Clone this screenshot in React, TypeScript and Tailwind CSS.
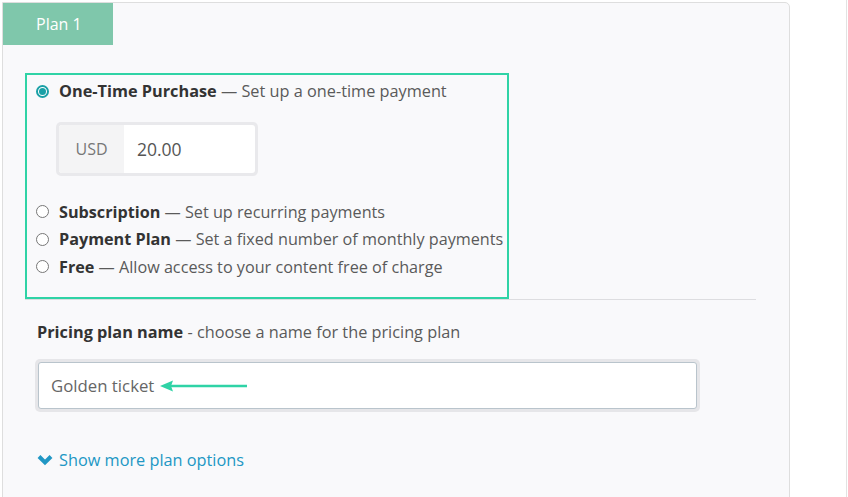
const options = [
  { title: "One-Time Purchase", desc: "Set up a one-time payment" },
  { title: "Subscription", desc: "Set up recurring payments" },
  { title: "Payment Plan", desc: "Set a fixed number of monthly payments" },
  { title: "Free", desc: "Allow access to your content free of charge" },
];

function Radio({ checked }: { checked?: boolean }) {
  return checked ? (
    <span className="w-[13px] h-[13px] rounded-full border-2 border-[#1aa0a6] bg-white flex items-center justify-center shrink-0">
      <span className="w-[7px] h-[7px] rounded-full bg-[#1aa0a6]" />
    </span>
  ) : (
    <span className="w-[13px] h-[13px] rounded-full border border-[#777] bg-white shrink-0" />
  );
}

function OptionRow({ title, desc, checked }: { title: string; desc: string; checked?: boolean }) {
  return (
    <label className="flex items-center gap-[10px] h-[27.5px] text-[16.2px] cursor-pointer">
      <Radio checked={checked} />
      <span className="text-[#5a5a5a] whitespace-nowrap">
        <b className="font-bold text-[#333]">{title}</b> — {desc}
      </span>
    </label>
  );
}

export default function App() {
  return (
    <div
      className="h-[497px] w-[848px] bg-white flex overflow-hidden"
      style={{ fontFamily: "'Open Sans', Arial, sans-serif" }}
    >
      {/* panel */}
      <section className="mt-[2px] ml-[2px] w-[788px] h-[520px] bg-[#f9f9fb] border border-[#dedede] rounded-tr-[5px]">
        <div className="w-[110px] h-[42px] bg-[#7fc7ab] text-white text-[16px] flex items-center pl-[33px]">
          Plan 1
        </div>

        {/* price type */}
        <div className="mt-[28px] ml-[22px] w-[484px] h-[226px] border-2 border-[#2fd3a6] pt-[6px] pl-[9px]">
          <label className="flex items-center gap-[10px] h-[20px] text-[16.3px]">
            <Radio checked />
            <span className="text-[#5a5a5a] whitespace-nowrap">
              <b className="font-bold text-[#333]">{options[0].title}</b> — {options[0].desc}
            </span>
          </label>

          <div className="mt-[21px] ml-[20px] w-[202px] p-[3px] bg-[#e9e9ec] rounded-[5px]">
            <div className="flex h-[48px] rounded-[3px] overflow-hidden bg-white">
              <span className="w-[65px] bg-[#f4f4f5] text-[#777] text-[16px] flex items-center justify-center">
                USD
              </span>
              <span className="flex-1 flex items-center pl-[13px] text-[17.5px] text-[#555]">20.00</span>
            </div>
          </div>

          <div className="mt-[22px] flex flex-col">
            {options.slice(1).map((o) => (
              <OptionRow key={o.title} title={o.title} desc={o.desc} />
            ))}
          </div>
        </div>

        <div className="ml-[22px] w-[731px] h-px bg-[#dddde0]" />

        {/* plan name */}
        <div className="ml-[34px] mt-[22px] leading-[20px] text-[16.3px] text-[#5a5a5a]">
          <b className="font-bold text-[#333]">Pricing plan name</b> - choose a name for the pricing plan
        </div>
        <div className="ml-[32px] mt-[17px] w-[665px] p-[3px] bg-[#e6e6e9] rounded-[5px]">
          <div className="h-[47px] bg-white border border-[#b9c4cc] rounded-[3px] flex items-center pl-[12px] text-[16.8px] text-[#666]">
            Golden ticket
            <svg className="ml-[5px]" width="90" height="14" viewBox="0 0 90 14">
              <line x1="10" y1="7" x2="88" y2="7" stroke="#2fd3a6" strokeWidth="2.5" />
              <polygon points="1,7 14,1.5 12,7 14,12.5" fill="#2fd3a6" />
            </svg>
          </div>
        </div>

        <a className="ml-[34px] mt-[38px] flex items-center gap-[6px] h-[20px] text-[16.3px] text-[#2197c4] cursor-pointer">
          <svg width="16" height="12" viewBox="0 0 16 12">
            <polyline points="2,2.5 8,8.5 14,2.5" fill="none" stroke="#2197c4" strokeWidth="4" strokeLinejoin="miter" />
          </svg>
          Show more plan options
        </a>
      </section>

      <div className="ml-auto mr-[1px] w-px h-full bg-[#e2e2e2]" />
    </div>
  );
}
